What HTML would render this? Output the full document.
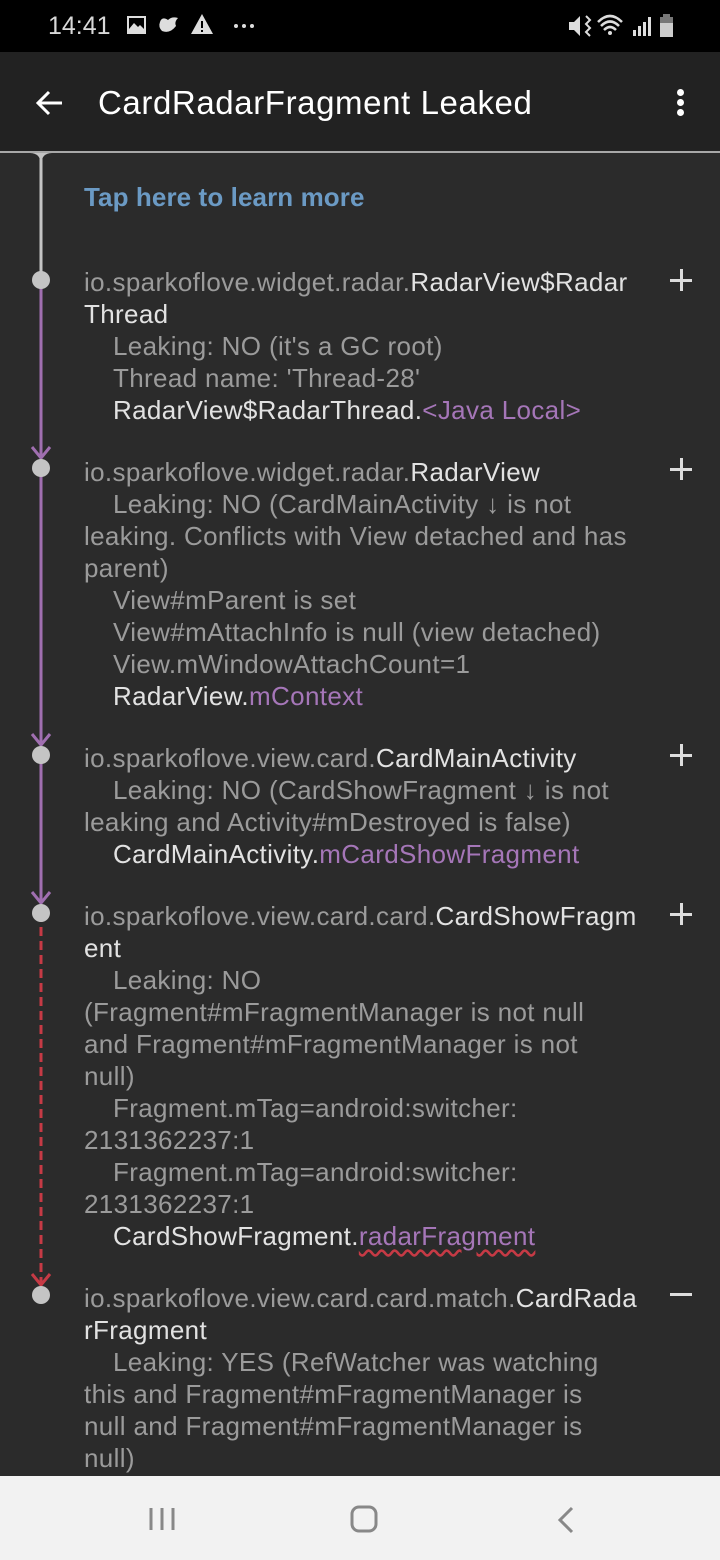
<!DOCTYPE html>
<html><head><meta charset="utf-8"><style>
*{margin:0;padding:0;box-sizing:border-box}
body{width:720px;height:1560px;background:#2b2b2b;position:relative;overflow:hidden;font-family:"Liberation Sans",sans-serif}
.sb{position:absolute;left:0;top:0;width:720px;height:52px;background:#000}
.ab{position:absolute;left:0;top:52px;width:720px;height:100px;background:#222}
.dv{position:absolute;left:0;top:151px;width:720px;height:2px;background:#a8a8a8}
.l{position:absolute;left:84px;height:32px;line-height:32px;font-size:26px;white-space:nowrap;color:#9b9b9b;letter-spacing:0.35px}
.i{padding-left:29px}
.w{color:#e2e2e2}.p{color:#a576b8}
.nav{position:absolute;left:0;top:1476px;width:720px;height:84px;background:#f2f2f2}
.plus{position:absolute;left:670px;width:22px;height:22px}
.plus:before{content:"";position:absolute;left:0;top:10px;width:22px;height:3px;background:#ddd}
.plus.v:after{content:"";position:absolute;left:10px;top:0;width:3px;height:22px;background:#ddd}
</style></head><body>
<div class="sb"></div>
<div style="position:absolute;left:48px;top:10px;font-size:25px;color:#d8d8d8;line-height:32px">14:41</div>
<svg style="position:absolute;left:0;top:0" width="720" height="52">
<rect x="127" y="16" width="19" height="18" fill="#ddd"/><rect x="129" y="18" width="15" height="11" fill="#000"/><path d="M129 29 L134 23 L138 27 L140 25 L144 29Z" fill="#ddd"/>
<path d="M160 22 Q162 16 168 20 Q172 16 178 18 Q174 22 176 26 Q170 34 162 31 Q158 27 160 22Z" fill="#ddd"/>
<path d="M202 14 L213 34 L191 34Z" fill="#ddd"/><rect x="201" y="21" width="2" height="7" fill="#000"/><rect x="201" y="30" width="2" height="2" fill="#000"/>
<circle cx="236" cy="26" r="2" fill="#ddd"/><circle cx="244" cy="26" r="2" fill="#ddd"/><circle cx="252" cy="26" r="2" fill="#ddd"/>
<path d="M569 22 L574 22 L580 16 L580 36 L574 30 L569 30Z" fill="#ddd"/><path d="M586 16 L590 20 L586 24 L590 28 L586 32 L590 36" stroke="#ddd" stroke-width="2" fill="none"/>
<path d="M598 22 Q610 10 622 22 M601 26 Q610 17 619 26 M604 30 Q610 24 616 30" stroke="#ddd" stroke-width="2.5" fill="none"/><circle cx="610" cy="33" r="2" fill="#ddd"/>
<rect x="633" y="30" width="3" height="6" fill="#ddd"/><rect x="638" y="26" width="3" height="10" fill="#ddd"/><rect x="643" y="22" width="3" height="14" fill="#ddd"/><rect x="648" y="17" width="3" height="19" fill="#ddd"/>
<rect x="660" y="17" width="13" height="20" fill="#ccc"/><rect x="663" y="14" width="7" height="3" fill="#777"/><rect x="660" y="17" width="13" height="6" fill="#777"/>
</svg>
<div class="ab"></div>
<svg style="position:absolute;left:34px;top:88px" width="32" height="30"><path d="M28 15 H4 M15 4 L4 15 L15 26" stroke="#fff" stroke-width="3" fill="none"/></svg>
<div style="position:absolute;left:98px;top:83px;font-size:33px;color:#fff;line-height:40px;letter-spacing:0.6px">CardRadarFragment Leaked</div>
<div style="position:absolute;left:677px;top:89px;width:7px;height:7px;border-radius:50%;background:#fff"></div>
<div style="position:absolute;left:677px;top:99px;width:7px;height:7px;border-radius:50%;background:#fff"></div>
<div style="position:absolute;left:677px;top:109px;width:7px;height:7px;border-radius:50%;background:#fff"></div>
<div class="dv"></div>
<svg style="position:absolute;left:0;top:0" width="90" height="1476">
<path d="M30 153 Q41 153 41 166 Q41 153 52 153Z" fill="#c4c4c4"/>
<line x1="41" y1="153" x2="41" y2="280" stroke="#c4c4c4" stroke-width="3"/>
<g stroke="#a06fb0" stroke-width="3" fill="none">
<line x1="41" y1="280" x2="41" y2="458"/><path d="M32 447 L41 458 L50 447"/>
<line x1="41" y1="468" x2="41" y2="745"/><path d="M32 734 L41 745 L50 734"/>
<line x1="41" y1="755" x2="41" y2="903"/><path d="M32 892 L41 903 L50 892"/>
</g>
<g stroke="#c63a45" stroke-width="3" fill="none">
<line x1="41" y1="913" x2="41" y2="1285" stroke-dasharray="9 5"/><path d="M32 1274 L41 1285 L50 1274"/>
</g>
<g fill="#c4c4c4"><circle cx="41" cy="280" r="9"/><circle cx="41" cy="468" r="9"/><circle cx="41" cy="755" r="9"/><circle cx="41" cy="913" r="9"/><circle cx="41" cy="1295" r="9"/></g>
</svg>
<div class="l" style="top:181px;color:#6b9ac4;font-weight:bold;font-size:26px;letter-spacing:0.1px">Tap here to learn more</div>

<div class="l" style="top:266px">io.sparkoflove.widget.radar.<span class="w">RadarView$Radar</span></div>
<div class="l w" style="top:298px">Thread</div>
<div class="l i" style="top:330px">Leaking: NO (it's a GC root)</div>
<div class="l i" style="top:362px">Thread name: 'Thread-28'</div>
<div class="l i w" style="top:394px">RadarView$RadarThread.<span class="p">&lt;Java Local&gt;</span></div>

<div class="l" style="top:456px">io.sparkoflove.widget.radar.<span class="w">RadarView</span></div>
<div class="l i" style="top:488px">Leaking: NO (CardMainActivity ↓ is not</div>
<div class="l" style="top:520px">leaking. Conflicts with View detached and has</div>
<div class="l" style="top:552px">parent)</div>
<div class="l i" style="top:584px">View#mParent is set</div>
<div class="l i" style="top:616px">View#mAttachInfo is null (view detached)</div>
<div class="l i" style="top:648px">View.mWindowAttachCount=1</div>
<div class="l i w" style="top:680px">RadarView.<span class="p">mContext</span></div>

<div class="l" style="top:742px">io.sparkoflove.view.card.<span class="w">CardMainActivity</span></div>
<div class="l i" style="top:774px">Leaking: NO (CardShowFragment ↓ is not</div>
<div class="l" style="top:806px">leaking and Activity#mDestroyed is false)</div>
<div class="l i w" style="top:838px">CardMainActivity.<span class="p">mCardShowFragment</span></div>

<div class="l" style="top:900px">io.sparkoflove.view.card.card.<span class="w">CardShowFragm</span></div>
<div class="l w" style="top:932px">ent</div>
<div class="l i" style="top:964px">Leaking: NO</div>
<div class="l" style="top:996px">(Fragment#mFragmentManager is not null</div>
<div class="l" style="top:1028px">and Fragment#mFragmentManager is not</div>
<div class="l" style="top:1060px">null)</div>
<div class="l i" style="top:1092px">Fragment.mTag=android:switcher:</div>
<div class="l" style="top:1124px">2131362237:1</div>
<div class="l i" style="top:1156px">Fragment.mTag=android:switcher:</div>
<div class="l" style="top:1188px">2131362237:1</div>
<div class="l i w" style="top:1220px">CardShowFragment.<span class="p" style="text-decoration:underline wavy #c63a45;text-underline-offset:4px">radarFragment</span></div>

<div class="l" style="top:1282px">io.sparkoflove.view.card.card.match.<span class="w">CardRada</span></div>
<div class="l w" style="top:1314px">rFragment</div>
<div class="l i" style="top:1346px">Leaking: YES (RefWatcher was watching</div>
<div class="l" style="top:1378px">this and Fragment#mFragmentManager is</div>
<div class="l" style="top:1410px">null and Fragment#mFragmentManager is</div>
<div class="l" style="top:1442px">null)</div>

<div class="plus v" style="top:269px"></div>
<div class="plus v" style="top:458px"></div>
<div class="plus v" style="top:744px"></div>
<div class="plus v" style="top:903px"></div>
<div class="plus" style="top:1283px"></div>

<div class="nav"></div>
<svg style="position:absolute;left:0;top:1476px" width="720" height="84">
<g stroke="#888" stroke-width="3" fill="none">
<line x1="151" y1="32" x2="151" y2="54"/><line x1="162" y1="32" x2="162" y2="54"/><line x1="173" y1="32" x2="173" y2="54"/>
<rect x="352" y="31" width="24" height="24" rx="7"/>
<path d="M572 32 L560 44 L572 56"/>
</g></svg>
</body></html>
